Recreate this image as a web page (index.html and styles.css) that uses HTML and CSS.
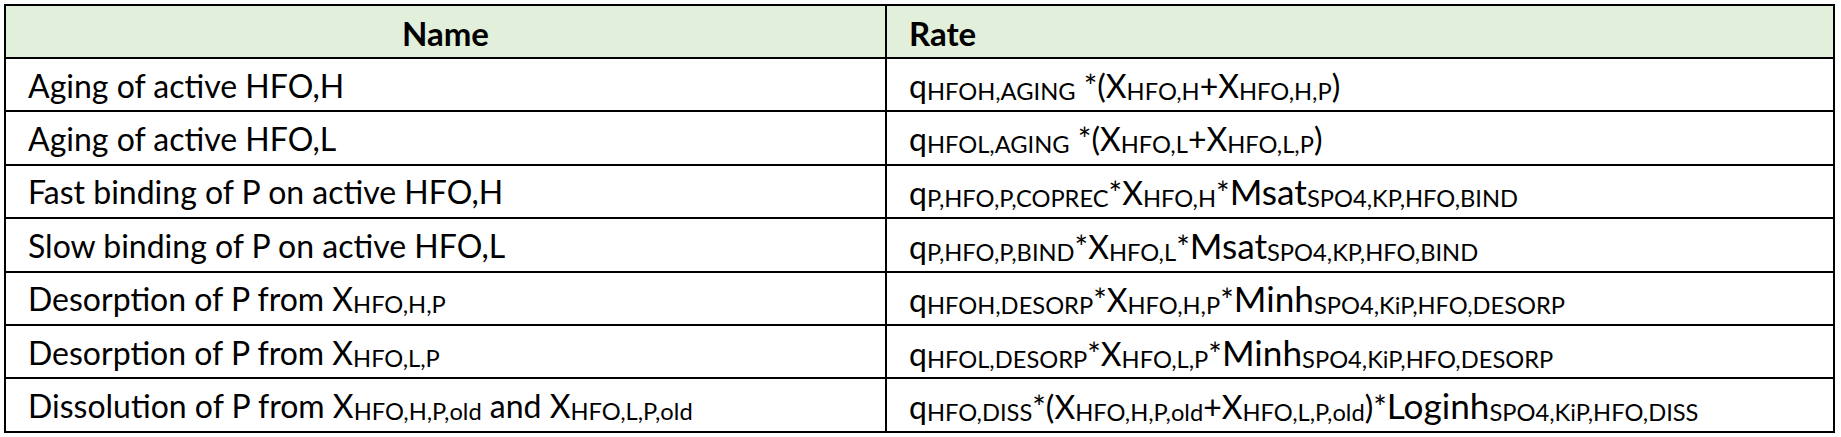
FILE: index.html
```html
<!DOCTYPE html>
<html lang="en">
<head>
<meta charset="utf-8">
<title>HFO phosphorus process rates</title>
<link rel="stylesheet" href="styles.css">
</head>
<body>
<table class="rates">
  <colgroup><col class="c-name"><col class="c-rate"></colgroup>
  <thead>
    <tr><th class="h-name">Name</th><th class="h-rate">Rate</th></tr>
  </thead>
  <tbody>
    <tr><td>Aging of active HFO,H</td><td>q<sub>HFOH,AGING</sub> *(X<sub>HFO,H</sub>+X<sub>HFO,H,P</sub>)</td></tr>
    <tr><td>Aging of active HFO,L</td><td>q<sub>HFOL,AGING</sub> *(X<sub>HFO,L</sub>+X<sub>HFO,L,P</sub>)</td></tr>
    <tr><td>Fast binding of P on active HFO,H</td><td>q<sub>P,HFO,P,COPREC</sub>*X<sub>HFO,H</sub>*<span class="fn">Msat</span><sub>SPO4,KP,HFO,BIND</sub></td></tr>
    <tr><td>Slow binding of P on active HFO,L</td><td>q<sub>P,HFO,P,BIND</sub>*X<sub>HFO,L</sub>*<span class="fn">Msat</span><sub>SPO4,KP,HFO,BIND</sub></td></tr>
    <tr><td>Desorption of P from X<sub>HFO,H,P</sub></td><td>q<sub>HFOH,DESORP</sub>*X<sub>HFO,H,P</sub>*<span class="fn">Minh</span><sub>SPO4,KiP,HFO,DESORP</sub></td></tr>
    <tr><td>Desorption of P from X<sub>HFO,L,P</sub></td><td>q<sub>HFOL,DESORP</sub>*X<sub>HFO,L,P</sub>*<span class="fn">Minh</span><sub>SPO4,KiP,HFO,DESORP</sub></td></tr>
    <tr><td>Dissolution of P from X<sub>HFO,H,P,old</sub> and X<sub>HFO,L,P,old</sub></td><td>q<sub>HFO,DISS</sub>*(X<sub>HFO,H,P,old</sub>+X<sub>HFO,L,P,old</sub>)*<span class="fn">Loginh</span><sub>SPO4,KiP,HFO,DISS</sub></td></tr>
  </tbody>
</table>
</body>
</html>
```

FILE: styles.css
```css
html, body {
  margin: 0;
  padding: 0;
  background: #ffffff;
}

body {
  padding: 4px 0 0 4px;
  font-family: "Lato", "Liberation Sans", sans-serif;
  color: #000000;
}

.rates {
  border-collapse: collapse;
  table-layout: fixed;
  width: 1829px;
  border: 2px solid #000000;
}

.c-name { width: 881px; }
.c-rate { width: 948px; }

.rates th,
.rates td {
  border: 2px solid #000000;
  padding: 2px 22px 0;
  font-size: 32px;
  line-height: 38px;
  white-space: nowrap;
  vertical-align: middle;
}

.rates thead tr { height: 53px; }
.rates tbody tr { height: 53.4px; }

.rates th {
  background: #e2efda;
  font-weight: 700;
  font-size: 33px;
}

.h-name { text-align: center; }
.h-rate { text-align: left; }

.rates td { font-weight: 400; }

.rates sub {
  font-size: 0.74em;
  line-height: 0;
  vertical-align: -0.08em;
}

.fn { font-size: 1.1em; }
```
